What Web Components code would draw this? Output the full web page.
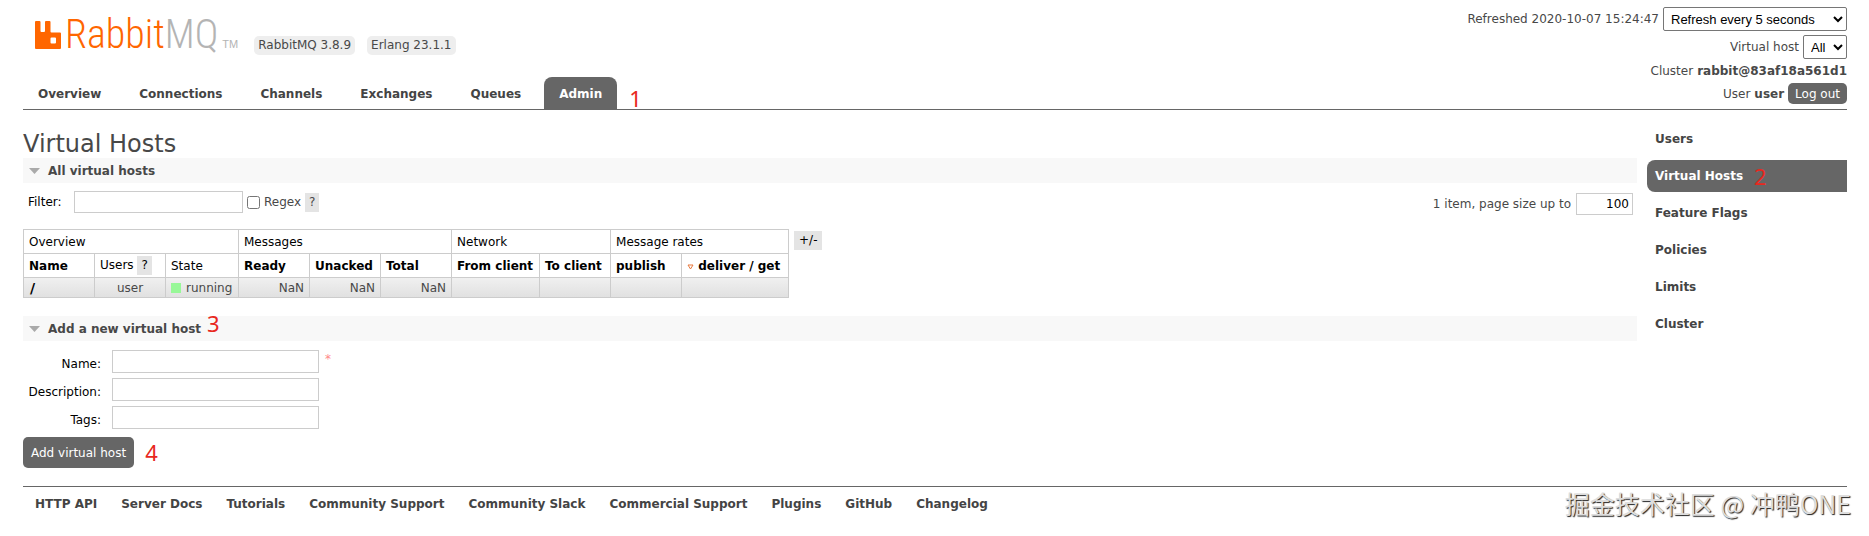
<!DOCTYPE html>
<html lang="en">
<head>
<meta charset="utf-8">
<title>RabbitMQ Management</title>
<style>
	body {
		margin: 0;
		position: relative;
		background: #fff;
		color: #484848;
		font: 12px/18px "DejaVu Sans", Verdana, sans-serif;
	}
</style>
</head>
<body>
<mq-header></mq-header>
<mq-layout>
	<mq-vhosts></mq-vhosts>
	<mq-side-menu slot="side"></mq-side-menu>
</mq-layout>
<mq-footer></mq-footer>

<script>
/**
 * Shared base: renders the styles and the markup in an open shadow root.
 */
class MqElement extends HTMLElement {
	connectedCallback() {
		if ( this.shadowRoot ) {
			return;
		}
		const template = document.createElement( 'template' );
		template.innerHTML = `
			<style>
				* { box-sizing: border-box; }
				${ this.renderStyle() }
			</style>
			${ this.renderElement() }
		`;
		this.attachShadow( { mode: 'open' } );
		this.shadowRoot.appendChild( template.content.cloneNode( true ) );
	}

	renderStyle() {
		return ':host { display: block; }';
	}

	renderElement() {
		return '<slot></slot>';
	}
}

/**
 * Red step number that floats beside the element it points at.
 */
class MqStep extends MqElement {
	renderStyle() {
		return `
			:host {
				position: absolute;
				color: #e8281e;
				font: 22px/24px "Noto Sans", sans-serif;
			}
		`;
	}
}

class MqLogo extends MqElement {
	renderStyle() {
		return `
			:host { display: block; }
			a {
				display: flex;
				align-items: flex-end;
				text-decoration: none;
				color: #f60;
				font: 300 40px/28px "Roboto Condensed", "Roboto", sans-serif;
			}
			svg { display: block; margin-right: 3px; }
			.mq { color: #b4b4b4; }
			.tm {
				margin-left: 4px;
				color: #b4b4b4;
				font: 11px/10px "Liberation Sans", sans-serif;
			}
		`;
	}

	renderElement() {
		return `
			<a href="#/" aria-label="RabbitMQ">
				<svg width="27" height="28" viewBox="0 0 27 28" fill="#f60" aria-hidden="true">
					<path fill-rule="evenodd" d="M1 0h3.500q1 0 1 1v9q0 1 1 1h2.500q1 0 1-1V1q0-1 1-1h3.500q1 0 1 1v9.500q0 1 1 1h8.500q1 0 1 1v14.500q0 1-1 1H1q-1 0-1-1V1q0-1 1-1zM16.500 16.500q-1 0-1 1v4q0 1 1 1h3.500q1 0 1-1v-4q0-1-1-1z"/>
				</svg>
				<span>Rabbit</span><span class="mq">MQ</span><span class="tm">TM</span>
			</a>
		`;
	}
}

class MqTabs extends MqElement {
	renderStyle() {
		return `
			:host { display: block; }
			nav { display: flex; gap: 8px; }
			a {
				padding: 8px 15px 6px;
				border-radius: 8px 8px 0 0;
				color: #444;
				font-weight: bold;
				text-decoration: none;
			}
			a.selected { background: #666; color: #fff; }
			.last { position: relative; display: flex; }
			mq-step { left: 100%; top: 9px; margin-left: 12px; }
		`;
	}

	renderElement() {
		const tabs = [ 'Overview', 'Connections', 'Channels', 'Exchanges', 'Queues' ];
		return `
			<nav>
				${ tabs.map( ( tab ) => `<a href="#/${ tab.toLowerCase() }">${ tab }</a>` ).join( '' ) }
				<div class="last">
					<a href="#/users" class="selected">Admin</a>
					<mq-step>1</mq-step>
				</div>
			</nav>
		`;
	}
}

class MqStatus extends MqElement {
	renderStyle() {
		return `
			:host {
				display: flex;
				flex-direction: column;
				align-items: flex-end;
			}
			div { display: flex; align-items: center; gap: 4px; }
			.control { height: 24px; margin-bottom: 4px; }
			.cluster { height: 16px; margin-bottom: 4px; }
			select {
				height: 24px;
				padding: 0 3px;
				border: 1px solid #767676;
				border-radius: 2px;
				background: #fff;
				color: #000;
				font: 13px "Liberation Sans", Arial, sans-serif;
			}
			#every { width: 184px; }
			#vhost { width: 44px; }
			button {
				height: 21px;
				padding: 0 7px;
				border: 0;
				border-radius: 5px;
				background: #666;
				color: #fff;
				font: inherit;
			}
		`;
	}

	renderElement() {
		return `
			<div class="control">
				<label for="every">Refreshed 2020-10-07 15:24:47</label>
				<select id="every"><option>Refresh every 5 seconds</option></select>
			</div>
			<div class="control">
				<label for="vhost">Virtual host</label>
				<select id="vhost"><option>All</option></select>
			</div>
			<div class="cluster">Cluster <b>rabbit@83af18a561d1</b></div>
			<div>User <b>user</b> <button type="button">Log out</button></div>
		`;
	}
}

class MqHeader extends MqElement {
	renderStyle() {
		return `
			:host {
				display: flex;
				justify-content: space-between;
				margin: 0 22px 0 23px;
				border-bottom: 1px solid #666;
			}
			.brand {
				display: flex;
				align-items: flex-start;
				padding: 21px 0 0 12px;
				height: 77px;
			}
			.version {
				margin: 15px 0 0 12px;
				padding: 0 4px;
				border-radius: 5px;
				background: #eee;
				line-height: 19px;
			}
			mq-logo { margin-right: 4px; }
			mq-status { padding-top: 7px; }
		`;
	}

	renderElement() {
		return `
			<div>
				<div class="brand">
					<mq-logo></mq-logo>
					<span class="version">RabbitMQ 3.8.9</span>
					<span class="version">Erlang 23.1.1</span>
				</div>
				<mq-tabs></mq-tabs>
			</div>
			<mq-status></mq-status>
		`;
	}
}

class MqLayout extends MqElement {
	renderStyle() {
		return `
			:host {
				display: grid;
				grid-template-columns: minmax(0, 1fr) 200px;
				gap: 10px;
				margin: 0 22px 0 23px;
			}
			main { padding-top: 20px; }
			aside { padding-top: 13px; }
		`;
	}

	renderElement() {
		return `
			<main><slot></slot></main>
			<aside><slot name="side"></slot></aside>
		`;
	}
}

class MqSideMenu extends MqElement {
	renderStyle() {
		return `
			:host { display: block; }
			nav { display: flex; flex-direction: column; gap: 5px; }
			a {
				position: relative;
				padding: 7px 8px;
				border-radius: 8px 0 0 8px;
				color: #444;
				font-weight: bold;
				text-decoration: none;
			}
			a.selected { background: #666; color: #fff; }
			mq-step { margin: -3px 0 0 11px; }
		`;
	}

	renderElement() {
		const items = [ 'Users', 'Virtual Hosts', 'Feature Flags', 'Policies', 'Limits', 'Cluster' ];
		return `
			<nav>
				${ items.map( ( item ) => {
					const selected = item === 'Virtual Hosts';
					return `<a href="#" class="${ selected ? 'selected' : '' }">${ item }${ selected ? '<mq-step>2</mq-step>' : '' }</a>`;
				} ).join( '' ) }
			</nav>
		`;
	}
}

class MqSection extends MqElement {
	renderStyle() {
		return `
			:host { display: block; margin-bottom: 18px; }
			h2 {
				display: flex;
				align-items: center;
				gap: 8px;
				height: 25px;
				margin: 0;
				padding-left: 6px;
				background: #f8f8f8;
				font-size: 12px;
			}
			h2 span { position: relative; }
			.body { padding-top: 8px; }
			::slotted(mq-step) { left: 100%; top: -9px; margin-left: 6px; }
		`;
	}

	renderElement() {
		return `
			<h2>
				<svg width="11" height="6" viewBox="0 0 11 6" aria-hidden="true"><path d="M0 0h11L5.500 6z" fill="#aaa"/></svg>
				<span>${ this.getAttribute( 'heading' ) }<slot name="step"></slot></span>
			</h2>
			<div class="body"><slot></slot></div>
		`;
	}
}

class MqFilter extends MqElement {
	renderStyle() {
		return `
			:host {
				display: flex;
				justify-content: space-between;
				align-items: flex-start;
				height: 24px;
				margin-bottom: 14px;
				padding: 0 4px 0 5px;
			}
			div { display: flex; align-items: center; }
			.pages { padding-top: 2px; }
			.name { width: 46px; color: #000; }
			input { font: inherit; }
			input[type="text"] {
				width: 169px;
				height: 22px;
				padding: 0 3px;
				border: 1px solid #ccc;
			}
			input[type="checkbox"] { width: 13px; height: 13px; margin: 0 4px; }
			input.size { width: 57px; margin-left: 5px; text-align: right; }
			mq-help { margin-left: 4px; }
		`;
	}

	renderElement() {
		return `
			<div>
				<label class="name" for="filter">Filter:</label>
				<input type="text" id="filter">
				<input type="checkbox" id="regex">
				<label for="regex">Regex</label>
				<mq-help>?</mq-help>
			</div>
			<div class="pages">
				<label for="size">1 item, page size up to</label>
				<input type="text" class="size" id="size" value="100">
			</div>
		`;
	}
}

class MqHelp extends MqElement {
	renderStyle() {
		return `
			:host {
				display: inline-block;
				padding: 0 4px;
				background: #e4e4e4;
				line-height: 19px;
			}
		`;
	}
}

class MqVhostTable extends MqElement {
	renderStyle() {
		return `
			:host { display: flex; align-items: flex-start; gap: 5px; }
			table {
				width: 766px;
				table-layout: fixed;
				border-collapse: collapse;
			}
			.std { width: 71px; }
			.state { width: 73px; }
			.from { width: 88px; }
			.deliver { width: 107px; }
			th, td {
				padding: 0 5px;
				border: 1px solid #ccc;
				white-space: nowrap;
			}
			th {
				height: 24px;
				color: #000;
				text-align: left;
			}
			.plain { font-weight: normal; }
			td { height: 20px; text-align: right; }
			td.center { text-align: center; }
			tbody tr { background: linear-gradient(#f0f0f0, #e0e0e0); }
			tbody th { height: 20px; padding-left: 6px; font-size: 14px; }
			.running { display: flex; align-items: center; gap: 5px; }
			.running::before {
				content: "";
				width: 10px;
				height: 10px;
				background: #98f898;
			}
			.toggle { margin-top: 2px; padding: 0 5px; color: #000; }
		`;
	}

	renderElement() {
		return `
			<table>
				<colgroup>
					<col class="std"><col class="std"><col class="state">
					<col class="std"><col class="std"><col class="std">
					<col class="from"><col class="std">
					<col class="std"><col class="deliver">
				</colgroup>
				<thead>
					<tr>
						<th class="plain" colspan="3">Overview</th>
						<th class="plain" colspan="3">Messages</th>
						<th class="plain" colspan="2">Network</th>
						<th class="plain" colspan="2">Message rates</th>
					</tr>
					<tr>
						<th>Name</th>
						<th class="plain">Users <mq-help>?</mq-help></th>
						<th class="plain">State</th>
						<th>Ready</th>
						<th>Unacked</th>
						<th>Total</th>
						<th>From client</th>
						<th>To client</th>
						<th>publish</th>
						<th><svg width="7" height="6" viewBox="0 0 7 6" fill="none" stroke="#e8783c" aria-hidden="true"><path d="M1 1h5L3.500 5z"/></svg> deliver / get</th>
					</tr>
				</thead>
				<tbody>
					<tr>
						<th>/</th>
						<td class="center">user</td>
						<td><span class="running">running</span></td>
						<td>NaN</td>
						<td>NaN</td>
						<td>NaN</td>
						<td></td>
						<td></td>
						<td></td>
						<td></td>
					</tr>
				</tbody>
			</table>
			<mq-help class="toggle">+/-</mq-help>
		`;
	}
}

class MqVhostForm extends MqElement {
	renderStyle() {
		return `
			:host { display: block; padding-top: 1px; }
			form {
				display: grid;
				grid-template-columns: 78px 207px auto;
				justify-content: start;
				gap: 5px 11px;
			}
			label { grid-column: 1; padding-top: 5px; color: #000; text-align: right; }
			input {
				grid-column: 2;
				height: 23px;
				padding: 0 3px;
				border: 1px solid #ccc;
				font: inherit;
			}
			.mandatory { margin-left: -5px; color: #f88; }
			.actions {
				position: relative;
				grid-column: 1 / -1;
				justify-self: start;
				margin-top: 3px;
			}
			button {
				height: 31px;
				padding: 0 8px;
				border: 0;
				border-radius: 5px;
				background: #666;
				color: #fff;
				font: inherit;
			}
			mq-step { left: 100%; top: 3px; margin-left: 11px; }
		`;
	}

	renderElement() {
		return `
			<form>
				<label for="name">Name:</label>
				<input type="text" id="name" required>
				<span class="mandatory">*</span>
				<label for="description">Description:</label>
				<input type="text" id="description">
				<label for="tags">Tags:</label>
				<input type="text" id="tags">
				<div class="actions">
					<button type="button">Add virtual host</button>
					<mq-step>4</mq-step>
				</div>
			</form>
		`;
	}
}

class MqVhosts extends MqElement {
	renderStyle() {
		return `
			:host { display: block; }
			h1 { margin: 0; font-size: 24px; font-weight: normal; line-height: 28px; }
		`;
	}

	renderElement() {
		return `
			<h1>Virtual Hosts</h1>
			<mq-section heading="All virtual hosts">
				<mq-filter></mq-filter>
				<mq-vhost-table></mq-vhost-table>
			</mq-section>
			<mq-section heading="Add a new virtual host">
				<mq-step slot="step">3</mq-step>
				<mq-vhost-form></mq-vhost-form>
			</mq-section>
		`;
	}
}

class MqFooter extends MqElement {
	renderStyle() {
		return `
			:host {
				display: block;
				position: relative;
				margin: 0 22px 0 23px;
				border-top: 1px solid #666;
			}
			nav { display: flex; gap: 24px; padding: 8px 12px; }
			a { color: #444; font-weight: bold; text-decoration: none; }
			.watermark {
				position: absolute;
				right: -4px;
				top: -2px;
				color: #ddd;
				font: 25px/36px "Noto Sans CJK SC", sans-serif;
				text-shadow: 1px 1px 1px #222;
				white-space: nowrap;
			}
		`;
	}

	renderElement() {
		const links = [
			'HTTP API',
			'Server Docs',
			'Tutorials',
			'Community Support',
			'Community Slack',
			'Commercial Support',
			'Plugins',
			'GitHub',
			'Changelog',
		];
		return `
			<nav>${ links.map( ( link ) => `<a href="#">${ link }</a>` ).join( '' ) }</nav>
			<div class="watermark">掘金技术社区 @ 冲鸭ONE</div>
		`;
	}
}

[
	[ 'mq-step', MqStep ],
	[ 'mq-help', MqHelp ],
	[ 'mq-logo', MqLogo ],
	[ 'mq-tabs', MqTabs ],
	[ 'mq-status', MqStatus ],
	[ 'mq-header', MqHeader ],
	[ 'mq-layout', MqLayout ],
	[ 'mq-side-menu', MqSideMenu ],
	[ 'mq-section', MqSection ],
	[ 'mq-filter', MqFilter ],
	[ 'mq-vhost-table', MqVhostTable ],
	[ 'mq-vhost-form', MqVhostForm ],
	[ 'mq-vhosts', MqVhosts ],
	[ 'mq-footer', MqFooter ],
].forEach( ( [ name, element ] ) => {
	if ( ! window.customElements.get( name ) ) {
		window.customElements.define( name, element );
	}
} );
</script>
</body>
</html>
